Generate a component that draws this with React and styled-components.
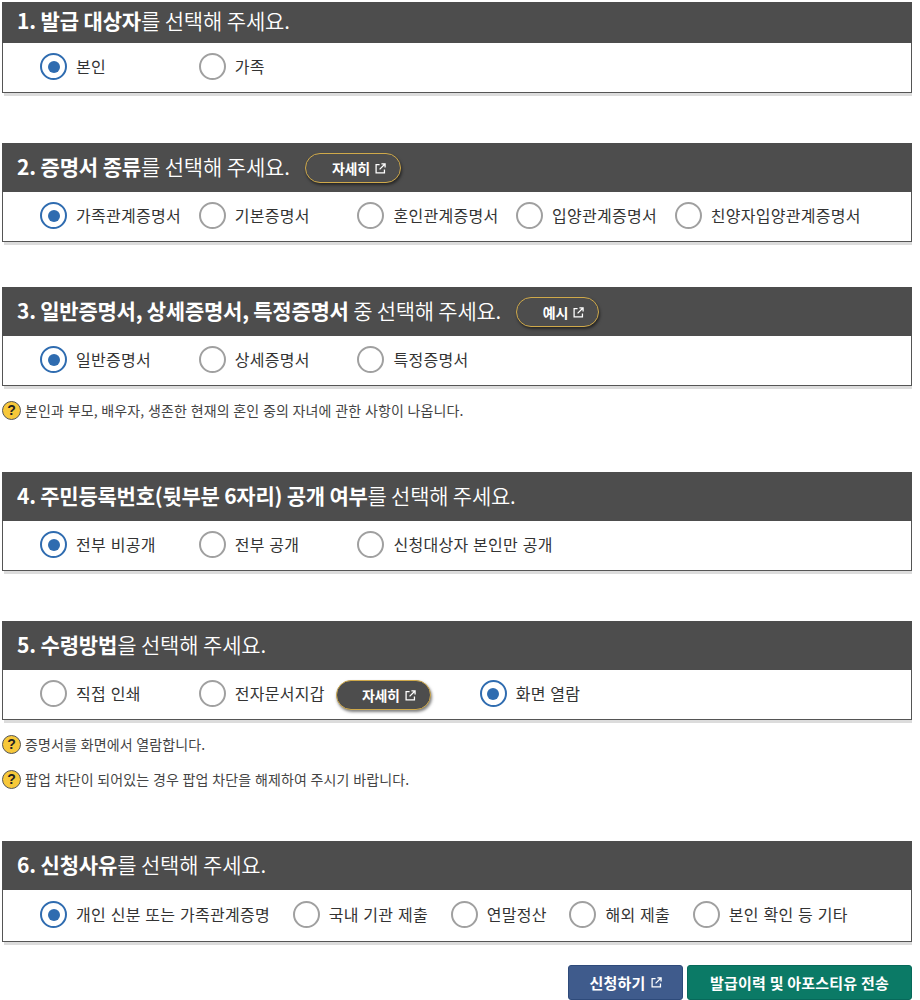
import React from 'react';
import styled, { createGlobalStyle } from 'styled-components';

const Global = createGlobalStyle`
  html, body { margin: 0; padding: 0; background: #fff; }
  body { font-family: "Noto Sans CJK KR", "Noto Sans", sans-serif; color: #333; overflow: hidden; }
`;
const Page = styled.div`
  width: 910px; height: 1000px; padding: 2px 0 0 2px; overflow: hidden;
`;
const Section = styled.section`
  margin-top: ${p => p.$top}px;
`;
const Header = styled.div`
  height: ${p => p.$h}px; background: #4d4d4d; color: #fff; display: flex; align-items: center;
  padding: 0 0 ${p => p.$h < 45 ? 5 : 3}px 15px; box-sizing: border-box; font-size: 21px;
  letter-spacing: ${p => p.$long ? -0.24 : -0.15}px; gap: 15px;
  strong { font-weight: 700; }
`;
const TitleRest = styled.span`font-weight: 350;`;
const Body = styled.div`
  height: ${p => p.$h || 50}px; box-sizing: border-box; border: 1px solid #555; border-top: none;
  box-shadow: 2px 3px 0 #dcdcdc; display: flex; align-items: center; padding: 0 0 2px 37px; background: #fff;
`;
const Option = styled.label`
  display: flex; align-items: center; flex: none; white-space: nowrap;
  min-width: ${p => p.$tight ? 0 : 158.7}px;
  margin-right: ${p => p.$flush ? 11 : p.$tight ? 22.7 : 0}px;
  font-size: 16px; color: #333; letter-spacing: 0.28px; word-spacing: 0.8px;
`;
const OptionText = styled.span`margin-bottom: 2px;`;
const Circle = styled.span`
  width: 27px; height: 27px; box-sizing: border-box; border-radius: 50%; margin-right: 9px; flex: none;
  border: 2px solid ${p => p.$on ? '#2f6cb0' : '#a0a0a0'}; display: flex; align-items: center; justify-content: center;
  &::after { content: ''; width: 12px; height: 12px; border-radius: 50%; background: ${p => p.$on ? '#2f6cb0' : 'transparent'}; }
`;
const Pill = styled.span`
  display: inline-flex; align-items: center; justify-content: flex-end; box-sizing: border-box; height: 30px; width: ${p => p.$w}px;
  border: 1.5px solid #cfa94a; border-radius: 15px; background: #4d4d4d; color: #fff; font-size: 14px; font-weight: 700;
  letter-spacing: -0.3px; padding-right: 14px; gap: 5px; box-shadow: 1px 2px 3px rgba(0,0,0,.5); flex: none;
  margin-top: 4px;
`;
const PillInBody = styled(Pill)`margin-right: 49px; margin-top: 3px;`;
const Ext = ({ size = 11 }) => (
  <svg width={size} height={size} viewBox="0 0 12 12" fill="none" stroke="#fff" strokeWidth="1.4">
    <path d="M5 1.7H1.2v9.1h9.1V7" />
    <path d="M5 7l5.6-5.6M7 1h4v4" />
  </svg>
);
const Notes = styled.div`display: flex; flex-direction: column; gap: 15px; margin-top: 14px;`;
const Note = styled.div`
  display: flex; align-items: center; height: 20px; font-size: 14px; color: #444; letter-spacing: 0.12px; word-spacing: 0.4px; gap: 4px;
`;
const QIcon = styled.span`
  width: 19px; height: 19px; box-sizing: border-box; border-radius: 50%; background: #f7c83a; border: 1px solid #555;
  display: flex; align-items: center; justify-content: center; font: 700 14px "Liberation Sans", sans-serif; color: #222; flex: none;
`;
const Actions = styled.div`display: flex; justify-content: flex-end; gap: 4px; margin-top: 23px;`;
const Button = styled.span`
  height: 35px; width: ${p => p.$w}px; box-sizing: border-box; display: flex; align-items: center; justify-content: center; gap: 5px;
  background: ${p => p.$bg}; border: 1px solid ${p => p.$bd}; border-radius: 3px; color: #fff; font-size: 15px; font-weight: 700; letter-spacing: 0.2px;
`;

const R = ({ on, flush, tight, children }) => (
  <Option $flush={flush} $tight={tight || flush}><Circle $on={on} /><OptionText>{children}</OptionText></Option>
);

export default function App() {
  return (
    <Page>
      <Global />
      <Section $top={0}>
        <Header $h={41}><div><strong>1. 발급 대상자</strong><TitleRest>를 선택해 주세요.</TitleRest></div></Header>
        <Body><R on>본인</R><R>가족</R></Body>
      </Section>
      <Section $top={50}>
        <Header $h={49}><div><strong>2. 증명서 종류</strong><TitleRest>를 선택해 주세요.</TitleRest></div><Pill $w={96}>자세히<Ext /></Pill></Header>
        <Body><R on>가족관계증명서</R><R>기본증명서</R><R>혼인관계증명서</R><R>입양관계증명서</R><R>친양자입양관계증명서</R></Body>
      </Section>
      <Section $top={45}>
        <Header $h={49} $long><div><strong>3. 일반증명서, 상세증명서, 특정증명서</strong><TitleRest> 중 선택해 주세요.</TitleRest></div><Pill $w={83}>예시<Ext /></Pill></Header>
        <Body><R on>일반증명서</R><R>상세증명서</R><R>특정증명서</R></Body>
        <Notes><Note><QIcon>?</QIcon>본인과 부모, 배우자, 생존한 현재의 혼인 중의 자녀에 관한 사항이 나옵니다.</Note></Notes>
      </Section>
      <Section $top={52}>
        <Header $h={49} $long><div><strong>4. 주민등록번호(뒷부분 6자리) 공개 여부</strong><TitleRest>를 선택해 주세요.</TitleRest></div></Header>
        <Body><R on>전부 비공개</R><R>전부 공개</R><R>신청대상자 본인만 공개</R></Body>
      </Section>
      <Section $top={50}>
        <Header $h={49}><div><strong>5. 수령방법</strong><TitleRest>을 선택해 주세요.</TitleRest></div></Header>
        <Body><R>직접 인쇄</R><R flush>전자문서지갑</R><PillInBody $w={95}>자세히<Ext /></PillInBody><R on>화면 열람</R></Body>
        <Notes>
          <Note><QIcon>?</QIcon>증명서를 화면에서 열람합니다.</Note>
          <Note><QIcon>?</QIcon>팝업 차단이 되어있는 경우 팝업 차단을 해제하여 주시기 바랍니다.</Note>
        </Notes>
      </Section>
      <Section $top={52}>
        <Header $h={49}><div><strong>6. 신청사유</strong><TitleRest>를 선택해 주세요.</TitleRest></div></Header>
        <Body $h={52}><R on tight>개인 신분 또는 가족관계증명</R><R tight>국내 기관 제출</R><R tight>연말정산</R><R tight>해외 제출</R><R tight>본인 확인 등 기타</R></Body>
        <Actions>
          <Button $w={115} $bg="#3f5b8c" $bd="#2e4a7a">신청하기<Ext /></Button>
          <Button $w={225} $bg="#0b7a66" $bd="#07695a">발급이력 및 아포스티유 전송</Button>
        </Actions>
      </Section>
    </Page>
  );
}
